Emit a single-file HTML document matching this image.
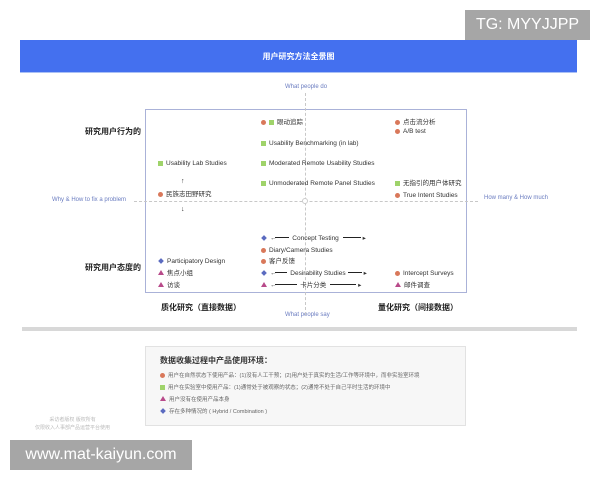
<!DOCTYPE html>
<html><head><meta charset="utf-8"><style>
*{margin:0;padding:0;box-sizing:border-box}
body{width:600px;height:480px;background:#fff;position:relative;overflow:hidden;font-family:"Liberation Sans","Noto Sans CJK SC",sans-serif;color:#333}
.a{position:absolute;white-space:nowrap}
.t{font-size:6.5px;color:#333;line-height:8px}
.c{display:inline-block;width:5px;height:5px;border-radius:50%;background:#d9785a;vertical-align:-0.5px;margin-right:3px}
.s{display:inline-block;width:5px;height:5px;background:#9fd36a;vertical-align:-0.5px;margin-right:3px}
.d{display:inline-block;width:4px;height:4px;background:#5b6bc0;transform:rotate(45deg);vertical-align:0px;margin-right:4px;margin-left:1px}
.g{display:inline-block;width:0;height:0;border-left:3px solid transparent;border-right:3px solid transparent;border-bottom:5px solid #b84a8a;vertical-align:0;margin-right:3px}
.ax{font-size:6px;color:#6a7cc0}
.h{font-size:8px;font-weight:bold;color:#222}
.ar{display:inline-block;width:26px;height:1px;background:#222;vertical-align:2px;position:relative;margin:0 2px}
</style></head><body>
<div class="a" style="left:465px;top:10px;width:125px;height:30px;background:#a6a6a6;color:#fff;font-size:16px;line-height:30px;text-align:center">TG: MYYJJPP</div>
<div class="a" style="left:20px;top:40px;width:557px;height:33px;background:#4470ef;color:#fff;font-size:8px;font-weight:bold;text-align:center;line-height:33px;border-bottom:1px solid #aac0f5">用户研究方法全景图</div>
<div class="a ax" style="left:285px;top:84px">What people do</div>
<div class="a ax" style="left:285px;top:312px">What people say</div>
<div class="a ax" style="left:52px;top:197px">Why &amp; How to fix a problem</div>
<div class="a ax" style="left:484px;top:195px">How many &amp; How much</div>
<div class="a" style="left:145px;top:109px;width:322px;height:184px;border:1px solid #aab2d8"></div>
<div class="a" style="left:305px;top:93px;width:0;height:222px;border-left:1px dashed #c8c8c8"></div>
<div class="a" style="left:134px;top:201px;width:344px;height:0;border-top:1px dashed #c8c8c8"></div>
<div class="a" style="left:302px;top:198px;width:6px;height:6px;border:1px solid #ccc;border-radius:50%;background:#fff"></div>
<div class="a h" style="left:85px;top:126px">研究用户行为的</div>
<div class="a h" style="left:85px;top:262px">研究用户态度的</div>
<div class="a h" style="left:161px;top:302px">质化研究（直接数据）</div>
<div class="a h" style="left:378px;top:302px">量化研究（间接数据）</div>
<div class="a t" style="left:261px;top:119px"><span class="c"></span><span class="s"></span>眼动追踪</div>
<div class="a t" style="left:261px;top:140px"><span class="s"></span>Usability Benchmarking (in lab)</div>
<div class="a t" style="left:261px;top:160px"><span class="s"></span>Moderated Remote Usability Studies</div>
<div class="a t" style="left:261px;top:180px"><span class="s"></span>Unmoderated Remote Panel Studies</div>
<div class="a t" style="left:395px;top:119px"><span class="c"></span>点击流分析</div>
<div class="a t" style="left:395px;top:128px"><span class="c"></span>A/B test</div>
<div class="a t" style="left:395px;top:180px"><span class="s"></span>无指引的用户体研究</div>
<div class="a t" style="left:395px;top:192px"><span class="c"></span>True Intent Studies</div>
<div class="a t" style="left:158px;top:160px"><span class="s"></span>Usability Lab Studies</div>
<div class="a t" style="left:158px;top:191px"><span class="c"></span>民族志田野研究</div>
<div class="a" style="left:181px;top:178px;font-size:7px;line-height:7px">↑</div>
<div class="a" style="left:181px;top:206px;font-size:7px;line-height:7px">↓</div>
<div class="a t" style="left:158px;top:258px"><span class="d"></span>Participatory Design</div>
<div class="a t" style="left:158px;top:270px"><span class="g"></span>焦点小组</div>
<div class="a t" style="left:158px;top:282px"><span class="g"></span>访谈</div>
<div class="a t" style="left:261px;top:235px"><span class="d"></span>←<span class="ar" style="width:14px;margin-left:-2px"></span> Concept Testing <span class="ar" style="width:18px"></span>▸</div>
<div class="a t" style="left:261px;top:247px"><span class="c"></span>Diary/Camera Studies</div>
<div class="a t" style="left:261px;top:258px"><span class="c"></span>客户反馈</div>
<div class="a t" style="left:261px;top:270px"><span class="d"></span>←<span class="ar" style="width:12px;margin-left:-2px"></span> Desirability Studies<span class="ar" style="width:14px"></span>▸</div>
<div class="a t" style="left:261px;top:282px"><span class="g"></span>←<span class="ar" style="width:22px;margin-left:-2px"></span> 卡片分类 <span class="ar" style="width:26px"></span>▸</div>
<div class="a t" style="left:395px;top:270px"><span class="c"></span>Intercept Surveys</div>
<div class="a t" style="left:395px;top:282px"><span class="g"></span>邮件调查</div>
<div class="a" style="left:22px;top:327px;width:555px;height:4px;background:#d8d8d8"></div>
<div class="a" style="left:145px;top:346px;width:321px;height:80px;border:1px solid #e2e2e2;background:#f7f7f7"></div>
<div class="a" style="left:160px;top:355px;font-size:8px;font-weight:bold;color:#333">数据收集过程中产品使用环境：</div>
<div class="a t" style="left:160px;top:372px;font-size:5.5px;color:#666"><span class="c"></span>用户在自然状态下使用产品：(1)没有人工干预；(2)用户处于真实的生活/工作等环境中，而非实验室环境</div>
<div class="a t" style="left:160px;top:384px;font-size:5.5px;color:#666"><span class="s"></span>用户在实验室中使用产品：(1)通常处于被观察的状态；(2)通常不处于自己平时生活的环境中</div>
<div class="a t" style="left:160px;top:396px;font-size:5.5px;color:#666"><span class="g"></span>用户没有在使用产品本身</div>
<div class="a t" style="left:160px;top:408px;font-size:5.5px;color:#666"><span class="d"></span>存在多种情况的 ( Hybrid / Combination )</div>
<div class="a" style="left:35px;top:416px;font-size:5px;color:#bbb;text-align:center;line-height:8px">采访者版权 版权所有<br>仅限收入人事部产品运营平台使用</div>
<div class="a" style="left:10px;top:440px;width:182px;height:30px;background:#a6a6a6;color:#fff;font-size:16px;line-height:30px;text-align:center">www.mat-kaiyun.com</div>
</body></html>
